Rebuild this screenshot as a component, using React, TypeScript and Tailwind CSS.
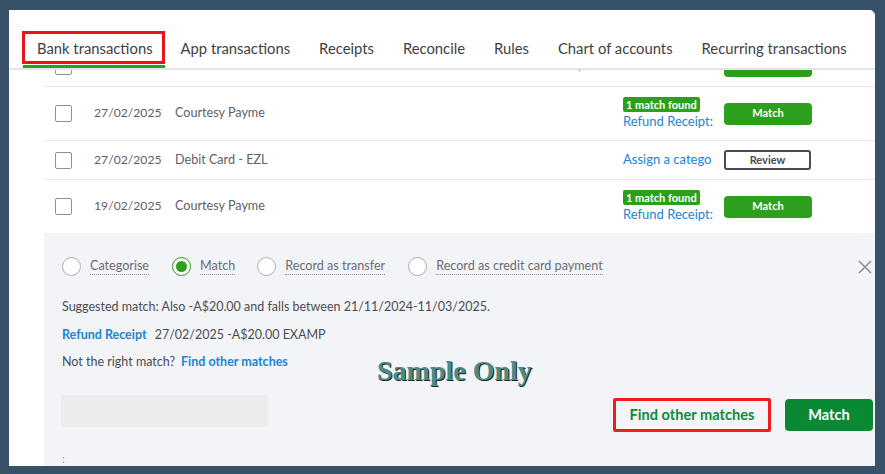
import React from "react";

const font = { fontFamily: "Lato, 'Open Sans', sans-serif" };

function Checkbox() {
  return <div className="w-[17px] h-[17px] shrink-0 rounded-[2px] border border-[#8d9096] bg-white" />;
}

function MatchBlock() {
  return (
    <div className="w-[101px] flex flex-col items-start">
      <span className="h-[15px] px-[3px] bg-[#2ca01c] text-white text-[11px] font-bold leading-[15px] rounded-[2px]">1 match found</span>
      <span className="text-[13px] leading-[18px] text-[#1a85d0]">Refund Receipt:</span>
    </div>
  );
}

function GreenBtn() {
  return (
    <div className="w-[88px] h-[22px] rounded-[4px] bg-[#2ca01c] text-white text-[11px] font-bold flex items-center justify-center">Match</div>
  );
}

function Row({ date, desc, children, h, last }: { date: string; desc: string; children: React.ReactNode; h: string; last?: boolean }) {
  return (
    <div className={`flex items-center ${last ? "" : "border-b border-[#e6e7ea]"} ${h}`}>
      <div className="ml-[11px]"><Checkbox /></div>
      <span className="ml-[22px] w-[81px] text-[12.2px] text-[#5f6066]">{date}</span>
      <span className="flex-1 text-[12.6px] text-[#5f6066]">{desc}</span>
      {children}
      <div className="w-[63px]" />
    </div>
  );
}

function Radio({ checked, label }: { checked?: boolean; label: string }) {
  return (
    <div className="flex items-center">
      <div
        className={`w-[19px] h-[19px] rounded-full bg-white border flex items-center justify-center ${checked ? "border-[#2ca01c]" : "border-[#a9adb4]"}`}
      >
        {checked && <div className="w-[11px] h-[11px] rounded-full bg-[#2ca01c]" />}
      </div>
      <span className="ml-[9px] text-[12.6px] leading-[16px] text-[#6b6c72] border-b border-dotted border-[#8d9096]">{label}</span>
    </div>
  );
}

export default function App() {
  return (
    <div style={font} className="w-[885px] h-[474px] bg-[#365168] pt-[10px] pl-[9px] pr-[10px] pb-[8px]">
      <div className="relative bg-white h-full rounded-tr-[6px] flex flex-col overflow-hidden">
        {/* Tab bar */}
        <div className="h-[60px] shrink-0 border-b-2 border-[#e4e5e8] flex items-start pl-[13px] pt-[21px] text-[14.8px] text-[#404145] relative z-10 bg-white">
          <div className="flex flex-col">
            <div className="h-[33px] border-[3px] border-[#e8141b] pl-[12px] pr-[9px] pt-[1px] flex items-center">Bank transactions</div>
            <div className="mt-[1px] ml-[1px] h-[3px] bg-[#2ca01c]" />
          </div>
          <div className="flex h-[33px] pt-[1px] items-center gap-[29px] ml-[16px]">
            <span>App transactions</span>
            <span>Receipts</span>
            <span>Reconcile</span>
            <span>Rules</span>
            <span>Chart of accounts</span>
            <span>Recurring transactions</span>
          </div>
        </div>

        {/* Content */}
        <div className="flex-1 ml-[35px] overflow-hidden flex flex-col">
          <div className="-mt-[24px]">
            <Row date="20/03/2025" desc="Intuit" h="h-[41px]">
              <span className="w-[60px] text-[12.6px] text-[#5f6066]">-A$34.90</span>
              <span className="w-[101px] text-[13px] text-[#1a85d0]">Transfer</span>
              <GreenBtn />
            </Row>
          </div>
          <Row date="27/02/2025" desc="Courtesy Payme" h="h-[54px]">
            <MatchBlock />
            <GreenBtn />
          </Row>
          <Row date="27/02/2025" desc="Debit Card - EZL" h="h-[39px]">
            <span className="w-[101px] text-[13px] text-[#1a85d0]">Assign a catego</span>
            <div className="w-[87px] h-[20px] rounded-[3px] border-2 border-[#4a4b50] text-[#4a4b50] text-[11px] font-bold flex items-center justify-center">Review</div>
            <div className="w-[1px]" />
          </Row>
          <Row date="19/02/2025" desc="Courtesy Payme" h="h-[53px]" last>
            <MatchBlock />
            <GreenBtn />
          </Row>

          {/* Expanded panel */}
          <div className="flex-1 bg-[#f3f4f8] pl-[18px] pr-[2px] pt-[24px] flex flex-col">
            <div className="flex items-center h-[19px]">
              <Radio label="Categorise" />
              <div className="ml-[23px]"><Radio checked label="Match" /></div>
              <div className="ml-[22px]"><Radio label="Record as transfer" /></div>
              <div className="ml-[23px]"><Radio label="Record as credit card payment" /></div>
              <svg className="ml-auto mr-[1px]" width="14" height="14" viewBox="0 0 14 14">
                <path d="M1 1 L13 13 M13 1 L1 13" stroke="#8d9096" strokeWidth="1.6" />
              </svg>
            </div>
            <div className="mt-[22px] text-[12.5px] leading-[18px] text-[#4b4c50]">
              Suggested match: Also -A$20.00 and falls between 21/11/2024-11/03/2025.
            </div>
            <div className="mt-[10px] text-[12.5px] leading-[18px] text-[#4b4c50]">
              <span className="font-bold text-[#1a85d0]">Refund Receipt</span>
              <span className="ml-[8px]">27/02/2025 -A$20.00 EXAMP</span>
            </div>
            <div className="mt-[9px] text-[12.5px] leading-[18px] text-[#4b4c50]">
              <span>Not the right match?</span>
              <span className="ml-[6px] font-bold text-[#1a85d0]">Find other matches</span>
            </div>
            <div className="mt-[24px] flex items-start">
              <div className="w-[207px] h-[32px] bg-[#ececec] -ml-[1px]" />
              <div className="ml-auto mt-[3px] w-[158px] h-[34px] border-[3px] border-[#ee1c1c] rounded-[2px] flex items-center justify-center text-[14.6px] font-bold text-[#108a3a]">
                Find other matches
              </div>
              <div className="ml-[14px] mt-[4px] w-[88px] h-[32px] rounded-[4px] bg-[#0a8935] text-white text-[14.6px] font-bold flex items-center justify-center">
                Match
              </div>
            </div>
            <div className="mt-[22px] text-[11px] leading-[10px] text-[#9a9ba0]">:</div>
          </div>
        </div>

        {/* Watermark */}
        <div
          className="absolute left-[368px] top-[340px] text-[28px] font-bold text-[#4e8a84]"
          style={{ fontFamily: "'Liberation Serif', serif", textShadow: "1px 1px 0 #1d2b2a" }}
        >
          Sample Only
        </div>
      </div>
    </div>
  );
}
